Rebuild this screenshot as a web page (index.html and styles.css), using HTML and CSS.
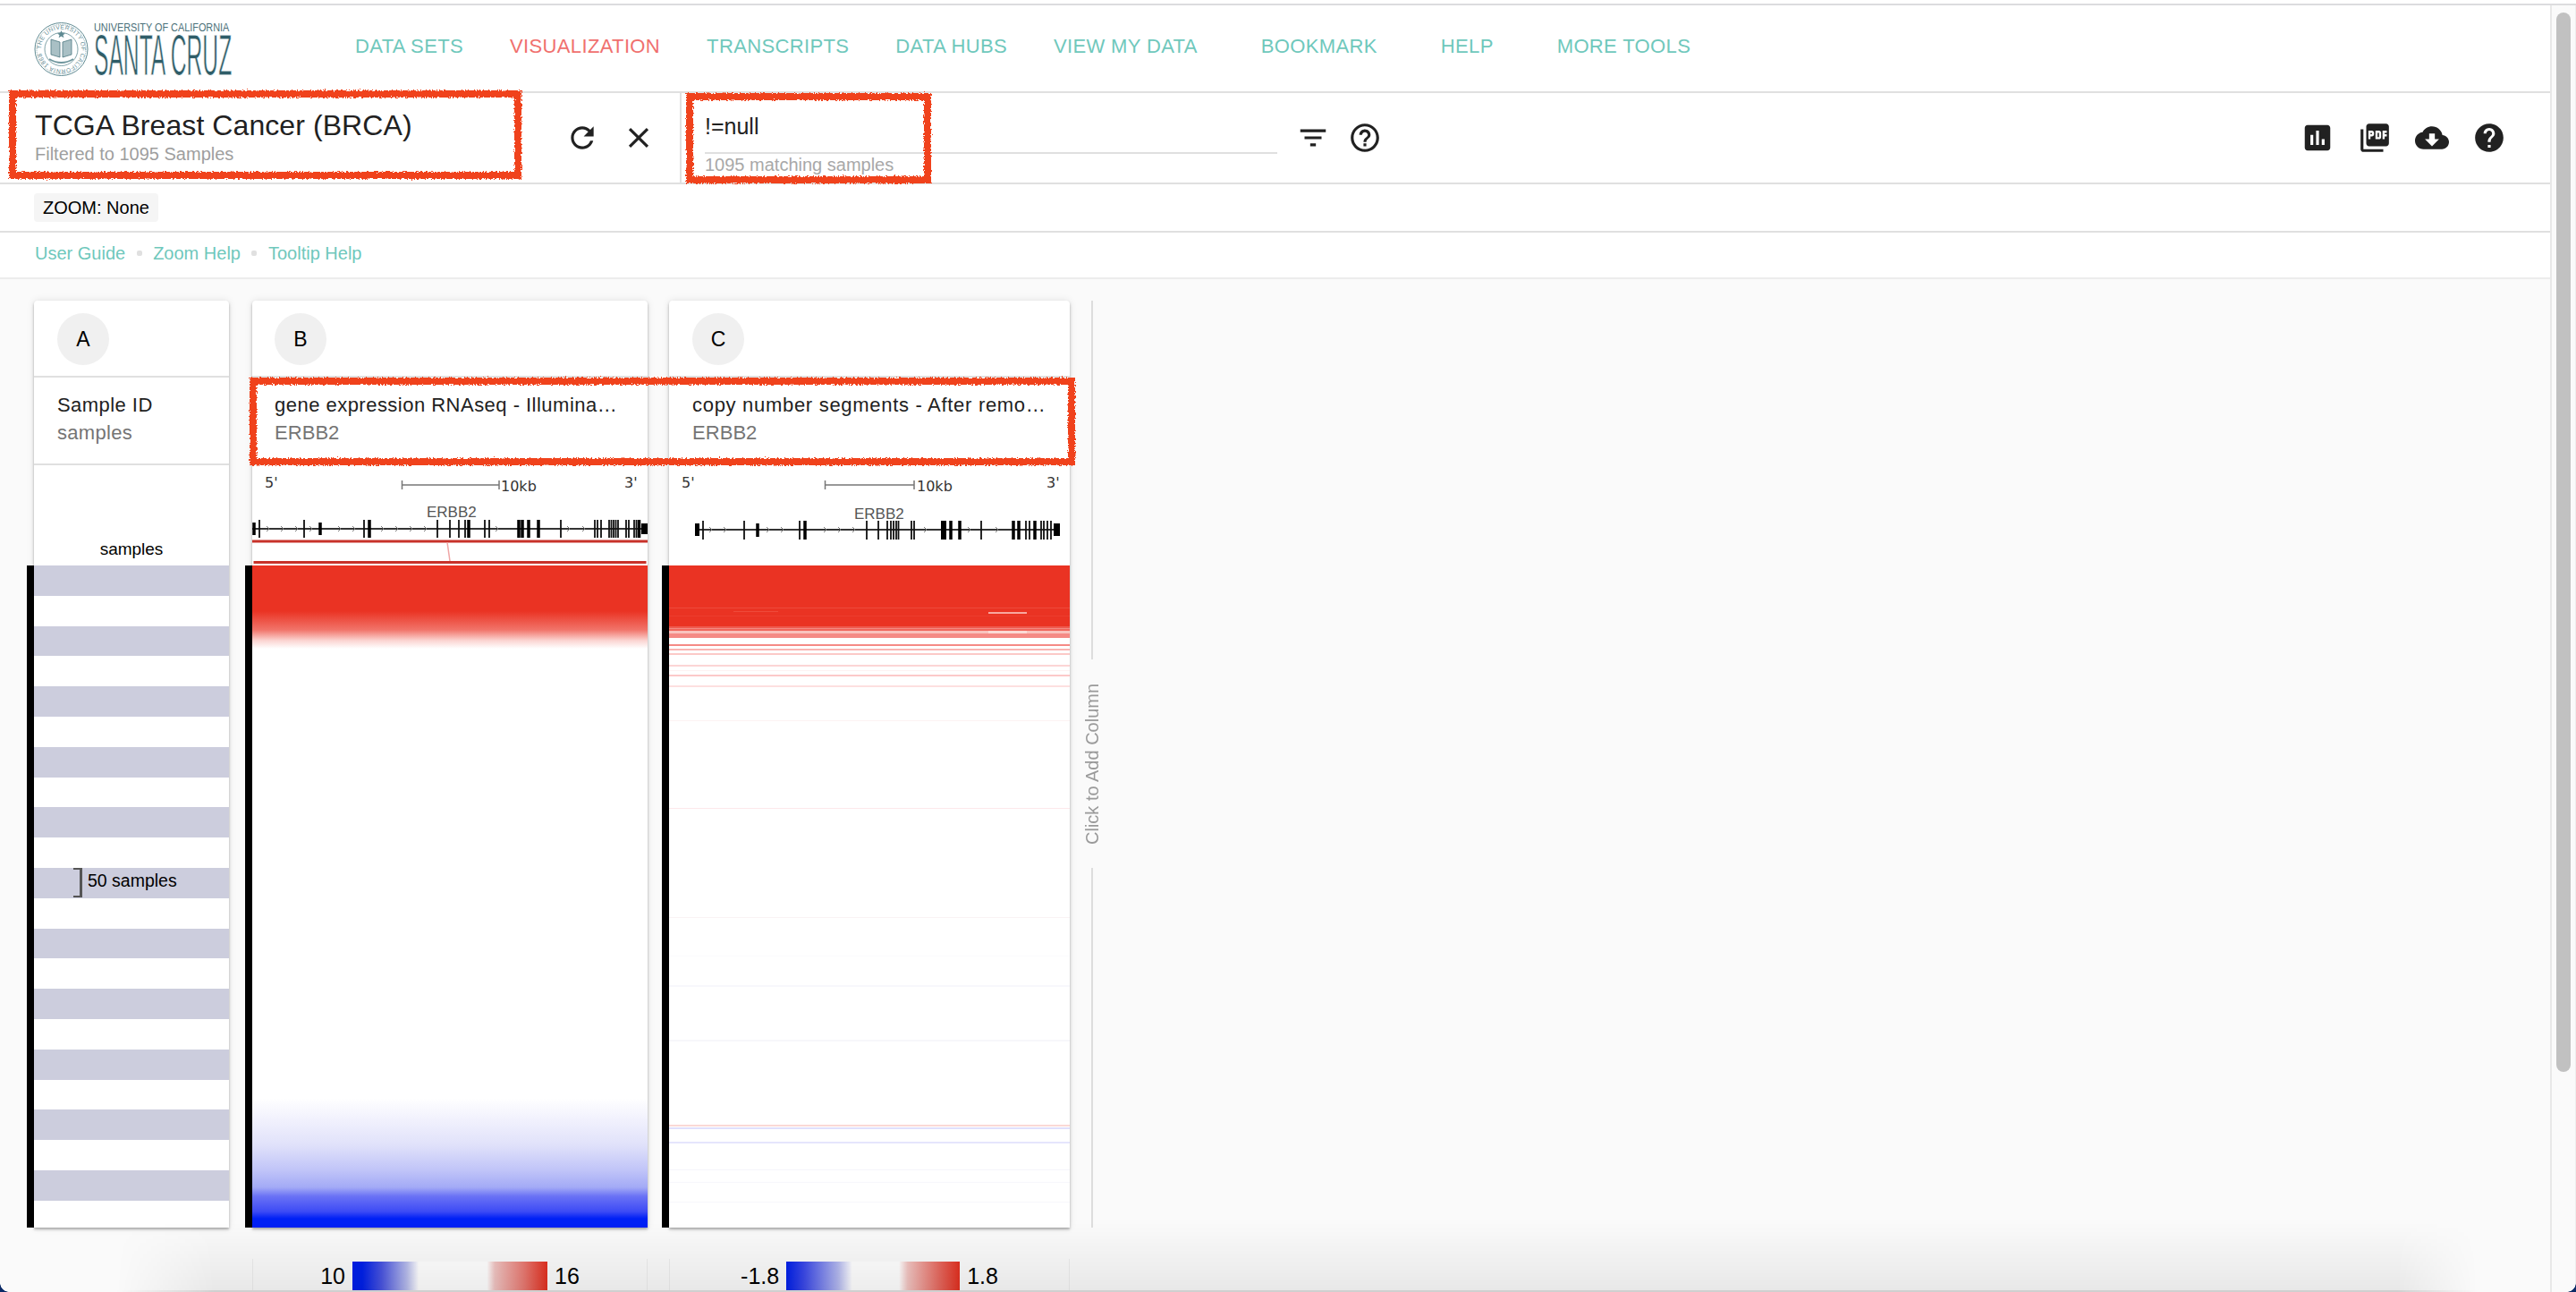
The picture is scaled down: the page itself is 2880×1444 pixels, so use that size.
FILE: index.html
```html
<!DOCTYPE html>
<html lang="en">
<head>
<meta charset="utf-8">
<title>UCSC Xena - Visualization</title>
<link rel="stylesheet" href="styles.css">
</head>
<body>
<svg class="defs" width="0" height="0" aria-hidden="true"><defs>
  <filter id="rough" x="-5%" y="-10%" width="110%" height="120%">
    <feTurbulence type="fractalNoise" baseFrequency="0.6" numOctaves="2" seed="4" result="n"/>
    <feDisplacementMap in="SourceGraphic" in2="n" scale="5" xChannelSelector="R" yChannelSelector="G"/>
  </filter>
</defs></svg>
<div class="shell">
  <div class="main">
    <header class="nav">
      <svg class="logo" viewBox="0 0 226 62" width="226" height="62">
        <defs><path id="ring" d="M30.5 30 m-22.5 0 a22.5 22.5 0 1 1 45 0 a22.5 22.5 0 1 1 -45 0"/></defs>
        <g fill="none" stroke="#5f8a92">
          <circle cx="30.5" cy="30" r="29.5" stroke-width="1"/>
          <circle cx="30.5" cy="30" r="27.5" stroke-width=".7" stroke-dasharray="1 1"/>
          <circle cx="30.5" cy="30" r="18.5" stroke-width=".8"/>
        </g>
        <text class="seal-text"><textPath href="#ring" textLength="136">THE UNIVERSITY OF CALIFORNIA 1868</textPath></text>
        <path d="M19 19 l10 3 v17 l-10 -3z M42 19 l-10 3 v17 l10 -3z" fill="#a9c0c5" stroke="#4c7780" stroke-width=".8"/>
        <path d="M30.500 9 l1.300 3 3.200 .2 -2.500 2 .9 3.100 -2.900 -1.800 -2.900 1.800 .9 -3.100 -2.500 -2 3.200 -.2z" fill="#5f8a92"/>
        <path d="M17 41 q13.500 8 27 0" fill="none" stroke="#6f969d" stroke-width="2"/>
        <text class="logo-top" transform="translate(67 10) scale(.87 1)">UNIVERSITY OF CALIFORNIA</text>
        <text class="logo-main" transform="translate(67 59) scale(.385 1)">SANTA CRUZ</text>
      </svg>
      <nav class="nav-links">
        <a class="nav-link">DATA SETS</a>
        <a class="nav-link is-active">VISUALIZATION</a>
        <a class="nav-link">TRANSCRIPTS</a>
        <a class="nav-link">DATA HUBS</a>
        <a class="nav-link">VIEW MY DATA</a>
        <a class="nav-link is-wide">BOOKMARK</a>
        <a class="nav-link is-wide">HELP</a>
        <a class="nav-link is-wide">MORE TOOLS</a>
      </nav>
    </header>

    <section class="toolbar">
      <div class="cohort-cell">
        <div class="cohort">
          <div class="cohort-title">TCGA Breast Cancer (BRCA)</div>
          <div class="cohort-sub">Filtered to 1095 Samples</div>
        </div>
        <svg class="icon" viewBox="0 0 24 24"><path d="M17.65 6.35C16.2 4.9 14.21 4 12 4c-4.42 0-7.99 3.58-7.99 8s3.57 8 7.99 8c3.73 0 6.84-2.55 7.73-6h-2.08c-.82 2.33-3.04 4-5.65 4-3.31 0-6-2.69-6-6s2.69-6 6-6c1.66 0 3.14.69 4.22 1.78L13 11h7V4l-2.35 2.35z"/></svg>
        <svg class="icon" viewBox="0 0 24 24"><path d="M19 6.41L17.59 5 12 10.59 6.41 5 5 6.41 10.59 12 5 17.59 6.41 19 12 13.41 17.59 19 19 17.59 13.41 12z"/></svg>
      </div>
      <div class="filter-cell">
        <div class="filter-field">
          <div class="filter-input">!=null</div>
          <div class="filter-help">1095 matching samples</div>
        </div>
        <svg class="icon" viewBox="0 0 24 24"><path d="M10 18h4v-2h-4v2zM3 6v2h18V6H3zm3 7h12v-2H6v2z"/></svg>
        <svg class="icon" viewBox="0 0 24 24"><path d="M11 18h2v-2h-2v2zm1-16C6.48 2 2 6.48 2 12s4.48 10 10 10 10-4.48 10-10S17.52 2 12 2zm0 18c-4.41 0-8-3.59-8-8s3.59-8 8-8 8 3.59 8 8-3.59 8-8 8zm0-14c-2.21 0-4 1.79-4 4h2c0-1.1.9-2 2-2s2 .9 2 2c0 2-3 1.75-3 5h2c0-2.25 3-2.5 3-5 0-2.21-1.79-4-4-4z"/></svg>
      </div>
      <div class="action-cell">
        <svg class="icon" viewBox="0 0 24 24"><path d="M19 3H5c-1.1 0-2 .9-2 2v14c0 1.1.9 2 2 2h14c1.1 0 2-.9 2-2V5c0-1.1-.9-2-2-2zM9 17H7v-7h2v7zm4 0h-2V7h2v10zm4 0h-2v-4h2v4z"/></svg>
        <svg class="icon" viewBox="0 0 24 24"><path d="M20 2H8c-1.1 0-2 .9-2 2v12c0 1.1.9 2 2 2h12c1.1 0 2-.9 2-2V4c0-1.1-.9-2-2-2zm-8.500 7.500c0 .83-.67 1.500-1.500 1.500H9v2H7.500V7H10c.83 0 1.500.67 1.500 1.500v1zm5 2c0 .83-.67 1.500-1.500 1.500h-2.500V7H15c.83 0 1.500.67 1.500 1.500v3zm4-3H19v1h1.500V11H19v2h-1.500V7h3v1.500zM9 9.500h1v-1H9v1zM4 6H2v14c0 1.100.9 2 2 2h14v-2H4V6zm10 5.500h1v-3h-1v3z"/></svg>
        <svg class="icon" viewBox="0 0 24 24"><path d="M19.35 10.04C18.67 6.59 15.64 4 12 4 9.11 4 6.6 5.64 5.35 8.04 2.34 8.36 0 10.91 0 14c0 3.31 2.69 6 6 6h13c2.76 0 5-2.24 5-5 0-2.64-2.05-4.78-4.65-4.96zM17 13l-5 5-5-5h3V9h4v4h3z"/></svg>
        <svg class="icon" viewBox="0 0 24 24"><path d="M12 2C6.48 2 2 6.48 2 12s4.48 10 10 10 10-4.48 10-10S17.52 2 12 2zm1 17h-2v-2h2v2zm2.07-7.75l-.9.92C13.45 12.9 13 13.5 13 15h-2v-.5c0-1.1.45-2.1 1.17-2.83l1.24-1.26c.37-.36.59-.86.59-1.41 0-1.1-.9-2-2-2s-2 .9-2 2H8c0-2.21 1.79-4 4-4s4 1.79 4 4c0 .88-.36 1.68-.93 2.25z"/></svg>
      </div>
    </section>

    <section class="zoom-bar"><span class="zoom-chip">ZOOM: None</span></section>

    <section class="help-bar">
      <a class="help-link">User Guide</a><span class="help-dot"></span>
      <a class="help-link">Zoom Help</a><span class="help-dot"></span>
      <a class="help-link">Tooltip Help</a>
    </section>

    <section class="board">
      <div class="col col-a">
        <div class="card">
          <div class="card-head"><span class="badge">A</span></div>
          <div class="card-title">
            <div class="title-main">Sample ID</div>
            <div class="title-sub">samples</div>
          </div>
          <div class="card-track track-a">samples</div>
          <div class="heat heat-a">
            <div class="sample-note"><span class="sample-bracket"></span><span class="sample-count">50 samples</span></div>
          </div>
        </div>
      </div>

      <div class="col col-b">
        <div class="card">
          <div class="card-head"><span class="badge">B</span></div>
          <div class="card-title">
            <div class="title-main">gene expression RNAseq - Illumina…</div>
            <div class="title-sub">ERBB2</div>
          </div>
          <svg class="card-track" viewBox="282 520 442 112" width="442" height="112">
            <text class="tk" x="296" y="545">5'</text>
            <text class="tk" x="698" y="545">3'</text>
            <path class="tk-scale" d="M449.500 537v10M449.500 542H558M558 537v10"/>
            <text class="tk" x="560" y="549">10kb</text>
            <text class="tk-gene" x="477" y="578">ERBB2</text>
            <path class="tk-line" d="M282 591H724"/>
            <path class="tk-arrow" d="M298 588l3 3-3 3M314 588l3 3-3 3M330 588l3 3-3 3M346 588l3 3-3 3M378 588l3 3-3 3M394 588l3 3-3 3M426 588l3 3-3 3M442 588l3 3-3 3M458 588l3 3-3 3M474 588l3 3-3 3M554 588l3 3-3 3M634 588l3 3-3 3M651 588l3 3-3 3"/>
            <path class="tk-exon" d="M290 581v20M340 581v20M407 581v20M489 581v20M503 581v20M513 581v20M520 581v20M542 581v20M547 581v20M627 581v20M665 581v20M668 581v20M672 581v20M681 581v20M683.500 581v20M686 581v20M688.500 581v20M691 581v20M700 581v20M703 581v20M709 581v20M711.500 581v20"/>
            <path class="tk-exon-b" d="M284 584v14M358 584v14M413 581v20M524 581v20M580 581v20M584 581v20M591 581v20M602 581v20M714.500 581v20"/>
            <rect x="717" y="585" width="7" height="12"/>
            <rect class="tk-red" x="282" y="603.500" width="442" height="3"/>
            <path class="tk-link" d="M500 606L503 627"/>
            <rect class="tk-red" x="283.500" y="627" width="439" height="3"/>
          </svg>
          <div class="heat heat-b"></div>
        </div>
        <div class="legend">
          <span>10</span><span class="legend-bar bar-b"></span><span>16</span>
        </div>
      </div>

      <div class="col col-c">
        <div class="card">
          <div class="card-head"><span class="badge">C</span></div>
          <div class="card-title">
            <div class="title-main">copy number segments - After remo…</div>
            <div class="title-sub">ERBB2</div>
          </div>
          <svg class="card-track" viewBox="748 520 448 112" width="448" height="112">
            <text class="tk" x="762" y="545">5'</text>
            <text class="tk" x="1170" y="545">3'</text>
            <path class="tk-scale" d="M922.500 537v10M922.500 542H1022M1022 537v10"/>
            <text class="tk" x="1025" y="549">10kb</text>
            <text class="tk-gene" x="955" y="580">ERBB2</text>
            <path class="tk-line" d="M777 592H1185"/>
            <path class="tk-arrow" d="M793 589l3 3-3 3M809 589l3 3-3 3M857 589l3 3-3 3M873 589l3 3-3 3M921 589l3 3-3 3M937 589l3 3-3 3M953 589l3 3-3 3M1033 589l3 3-3 3M1082 589l3 3-3 3M1113 589l3 3-3 3"/>
            <path class="tk-exon" d="M786 582v21M832 582v21M894 582v21M969 582v21M982 582v21M992 582v21M996 582v21M999 582v21M1002 582v21M1004.500 582v21M1019 582v21M1022 582v21M1097 582v21M1147 582v21M1151 582v21M1164 582v21M1167 582v21M1171 582v21M1175 582v21"/>
            <path class="tk-exon-b" d="M847 585v15M900 582v21M1063 582v21M1073 582v21M1133 582v21M1139 582v21M1157 582v21"/>
            <rect x="777" y="585" width="5" height="14"/>
            <rect x="1052" y="582" width="6" height="21"/>
            <rect x="1178" y="585" width="7" height="14"/>
          </svg>
          <div class="heat">
            <svg class="heat-svg" viewBox="748 632 448 740" preserveAspectRatio="none">
              <rect x="748" y="632" width="448" height="68" fill="#ea3323"/>
              <rect x="748" y="679" width="448" height="1" fill="#ee4a3b"/>
              <rect x="748" y="688" width="448" height="1" fill="#ec3d2e"/>
              <rect x="820" y="683" width="50" height="1" fill="#ee4a3b"/>
              <rect x="1105" y="684" width="43" height="2" fill="#f8a8a0"/>
              <rect x="748" y="700" width="448" height="2" fill="#ee5a4e"/>
              <rect x="748" y="702" width="448" height="1" fill="#f48a82"/>
              <rect x="748" y="703" width="448" height="2" fill="#f0665c"/>
              <rect x="748" y="705" width="448" height="3" fill="#f9c2bd"/>
              <rect x="748" y="708" width="448" height="5" fill="#f58a85"/>
              <rect x="1105" y="705" width="43" height="3" fill="#fbdad6"/>
              <rect x="748" y="720" width="448" height="2" fill="#f58a85"/>
              <rect x="748" y="725" width="448" height="2" fill="#fab5b2"/>
              <rect x="748" y="730" width="448" height="2" fill="#fcc9c7"/>
              <rect x="748" y="743" width="448" height="2" fill="#fcd5d5"/>
              <rect x="748" y="749" width="448" height="1" fill="#fef2f2"/>
              <rect x="748" y="754" width="448" height="2" fill="#fcc9c9"/>
              <rect x="748" y="766" width="448" height="2" fill="#fde0e0"/>
              <rect x="748" y="805" width="448" height="1" fill="#fdf2f2"/>
              <rect x="748" y="903" width="448" height="1" fill="#fde8ea"/>
              <rect x="748" y="1025" width="448" height="1" fill="#f9f3f4"/>
              <rect x="748" y="1068" width="448" height="1" fill="#fbfbfd"/>
              <rect x="748" y="1101" width="448" height="2" fill="#f7f7fc"/>
              <rect x="748" y="1162" width="448" height="2" fill="#f7f7fb"/>
              <rect x="748" y="1257" width="448" height="2" fill="#fbd9d5"/>
              <rect x="748" y="1260" width="448" height="2" fill="#e0e0fc"/>
              <rect x="748" y="1276" width="448" height="2" fill="#e5e5fc"/>
              <rect x="748" y="1307" width="448" height="1" fill="#f5f5fb"/>
              <rect x="748" y="1321" width="448" height="1" fill="#f7f7fb"/>
              <rect x="748" y="1343" width="448" height="1" fill="#f7f7fb"/>
            </svg>
          </div>
        </div>
        <div class="legend">
          <span>-1.8</span><span class="legend-bar bar-c"></span><span>1.8</span>
        </div>
      </div>

      <div class="add-col"><div class="add-tab">Click to Add Column</div></div>
    </section>
  </div>
  <aside class="scroll"><div class="scroll-thumb"></div></aside>
</div>

<div class="mark mark-cohort"></div>
<div class="mark mark-filter"></div>
<div class="mark mark-titles"></div>
<div class="shade"></div>
<div class="corner corner-l"></div>
<div class="corner corner-r"></div>
</body>
</html>
```

FILE: styles.css
```css
* { box-sizing: border-box; }
html, body { margin: 0; height: 1444px; overflow: hidden; }
body {
  position: relative;
  padding-top: 4px;
  background: #fff;
  color: #212121;
  font-family: "Liberation Sans", Arial, sans-serif;
}
.defs { position: absolute; }

.shell { display: flex; height: 1440px; border-top: 2px solid #dcdcde; background: #fafafa; }
.main { flex: 1; min-width: 0; overflow: hidden; }

/* nav */
.nav { display: flex; align-items: center; height: 98px; padding: 0 0 0 38px; background: #fff; border-bottom: 2px solid #e0e0e0; }
.logo { flex: none; margin-top: 3px; overflow: visible; }
.seal-text { font-size: 6.600px; fill: #5f8a92; }
.logo-top { font-size: 12.500px; fill: #4a7079; }
.logo-main { font-size: 64px; fill: #2f5d68; stroke: #fff; stroke-width: .9px; }
.nav-links { display: flex; gap: 52px; margin-left: 133px; margin-top: -4px; }
.nav-link { font-size: 22px; line-height: 26px; letter-spacing: .36px; color: #6fc8bc; white-space: nowrap; }
.nav-link.is-active { color: #f0706e; }
.nav-link.is-wide { margin-left: 19px; }

/* toolbar */
.toolbar { display: flex; height: 102px; background: #fff; border-bottom: 2px solid #e0e0e0; }
.icon { flex: none; width: 38px; height: 38px; fill: #212121; }
.cohort-cell { display: flex; align-items: center; width: 762px; padding-left: 39px; border-right: 2px solid #e0e0e0; }
.cohort { width: 593px; align-self: flex-start; padding-top: 18px; }
.cohort + .icon + .icon { margin-left: 25px; }
.cohort-title { font-size: 32px; line-height: 37px; letter-spacing: .08px; white-space: nowrap; }
.cohort-sub { font-size: 20px; line-height: 26px; color: #9e9e9e; white-space: nowrap; }
.filter-cell { display: flex; align-items: center; padding-left: 26px; }
.filter-field { width: 640px; margin-right: 21px; align-self: flex-start; padding-top: 22px; }
.filter-input { height: 46px; font-size: 25px; line-height: 30px; border-bottom: 2px solid #e0e0e0; }
.filter-help { font-size: 20px; line-height: 24px; color: #a8a8a8; white-space: nowrap; }
.filter-field + .icon + .icon { margin-left: 20px; }
.action-cell { display: flex; align-items: center; gap: 26px; margin-left: auto; padding-right: 49px; }

/* zoom + help */
.zoom-bar { display: flex; align-items: center; height: 54px; padding: 0 0 0 38px; background: #fff; border-bottom: 2px solid #e0e0e0; }
.zoom-chip { height: 32px; padding: 0 10px; font-size: 20px; line-height: 32px; color: #000; background: #f5f5f5; border-radius: 4px; }
.help-bar { display: flex; align-items: center; gap: 12.500px; height: 52px; padding: 0 0 4px 39px; background: #fff; border-bottom: 2px solid #ececec; }
.help-link { font-size: 20px; line-height: 24px; color: #6fc8bc; white-space: nowrap; }
.help-dot { width: 6px; height: 6px; border-radius: 2px; background: #e0e0e0; }

/* columns */
.board { display: flex; align-items: flex-start; padding: 24px 0 0 38px; }
.col { display: flex; flex-direction: column; flex: none; }
.col-a { width: 218px; margin-right: 26px; }
.col-b { width: 442px; margin-right: 24px; }
.col-c { width: 448px; margin-right: 24px; }
.card { background: #fff; border-radius: 4px 4px 0 0; box-shadow: 0 2px 3px rgba(0,0,0,.3), 0 0 8px rgba(0,0,0,.1); }
.card-head { height: 86px; padding: 14px 0 0 26px; border-bottom: 2px solid #e0e0e0; }
.col-b .card-head, .col-b .card-title { padding-left: 25px; }
.badge { display: flex; align-items: center; justify-content: center; width: 58px; height: 58px; border-radius: 50%; background: #f0f0f0; color: #000; font-size: 23px; }
.card-title { height: 98px; padding: 16px 0 0 26px; border-bottom: 2px solid #e0e0e0; white-space: nowrap; overflow: hidden; }
.title-main { font-size: 22px; line-height: 30px; letter-spacing: .7px; color: #212121; }
.title-sub { font-size: 22px; line-height: 32px; letter-spacing: .05px; color: #757575; }
.col-a .title-main { letter-spacing: .45px; }
.col-a .title-sub { letter-spacing: .3px; }
.col-b .title-main { letter-spacing: .48px; }
.card-track { display: block; height: 112px; }
.track-a { display: flex; align-items: flex-end; justify-content: center; padding-bottom: 8px; font-size: 19px; line-height: 20px; color: #000; }

/* genome track */
.tk { fill: #333; font-family: "DejaVu Sans", sans-serif; font-size: 16px; }
.tk-gene { font-size: 17px; fill: #555; }
.tk-scale { fill: none; stroke: #777; stroke-width: 1.500; }
.tk-line { fill: none; stroke: #333; stroke-width: 2; }
.tk-arrow { fill: none; stroke: #777; stroke-width: 1; }
.tk-exon { fill: none; stroke: #111; stroke-width: 1.800; }
.tk-exon-b { fill: none; stroke: #000; stroke-width: 3.500; }
.tk-red { fill: #c8322a; }
.tk-link { fill: none; stroke: #f0a5a5; stroke-width: 1.500; }

/* heatmaps */
.heat { position: relative; height: 740px; }
.heat::before { content: ""; position: absolute; left: -8px; top: 0; bottom: 0; width: 8px; background: #000; }
.heat-svg { display: block; width: 100%; height: 100%; }
.heat-a { background: repeating-linear-gradient(to bottom, #cccddd 0, #cccddd 33.800px, #fff 33.800px, #fff 67.600px); }
.heat-b {
  background: linear-gradient(to bottom,
    #ea3323 0, #ea3323 51px, #f1746a 72px, #fbd5d2 84px, #fff 93px,
    #fff 595px, #f1f1fd 620px, #e0e1fa 648px, #c0c4f8 676px, #a3aaf6 695px,
    #6a72f5 705px, #3d4bf5 722px, #0020f5 730px, #0020f5 740px);
}
.sample-note { position: absolute; left: 44px; top: 338px; display: flex; align-items: center; height: 33px; font-size: 19.500px; color: #000; white-space: nowrap; }
.sample-bracket { width: 10px; height: 33px; margin-right: 6px; border: 2px solid #555; border-left: 0; border-right-width: 3px; }
.sample-count { margin-top: -4px; }

/* legends */
.legend { display: flex; align-items: center; justify-content: center; gap: 8px; height: 60px; margin-top: 35px; padding-bottom: 25px; padding-top: 3px; font-size: 25px; color: #000; border-left: 1px solid rgba(0,0,0,.05); border-right: 1px solid rgba(0,0,0,.05); }
.legend-bar { height: 32px; }
.bar-b { width: 218px; background: linear-gradient(to right, #0020e8 0, #0020e8 5%, #4a55e0 15%, #b8bdec 28%, #fff 34%, #fff 69%, #f0c4c2 73%, #e87a72 88%, #e23020 100%); }
.bar-c { width: 194px; background: linear-gradient(to right, #0020e8 0, #3a48e8 10%, #b4b9ef 30%, #fff 38%, #fff 65%, #f2c5c2 70%, #e66a60 88%, #e23020 100%); }

/* add column */
.add-col { position: relative; flex: none; width: 2px; height: 1036px; background: #dddddd; }
.add-tab { position: absolute; left: -12px; top: 401px; width: 26px; height: 233px; display: flex; align-items: center; justify-content: center; background: #fafafa; writing-mode: vertical-rl; transform: rotate(180deg); font-size: 20px; color: #9a9a9a; white-space: nowrap; }

/* scrollbar */
.scroll { flex: none; width: 29px; padding: 8px 0 0 5px; border-left: 2px solid #e8e8e8; border-right: 1px solid #eee; background: #fafafa; }
.scroll-thumb { width: 16px; height: 1184px; border-radius: 8px; background: #c1c1c1; }

/* annotation marks */
.mark { position: absolute; border: 8px solid #f0421f; filter: url(#rough); pointer-events: none; }
.mark-cohort { left: 10px; top: 101px; width: 573px; height: 99px; }
.mark-filter { left: 767px; top: 104px; width: 274px; height: 101px; }
.mark-titles { left: 279px; top: 422px; width: 923px; height: 98px; }

/* window chrome */
.shade { position: absolute; left: 130px; right: 110px; bottom: 0; height: 78px; border-bottom: 2px solid #d0d0d0; background: linear-gradient(to bottom, rgba(0,0,0,0), rgba(0,0,0,.07)); -webkit-mask-image: linear-gradient(to right, transparent 0, #000 110px, #000 calc(100% - 90px), transparent 100%); pointer-events: none; }
.corner { position: absolute; bottom: 0; width: 10px; height: 10px; }
.corner-l { left: 0; background: radial-gradient(circle at top right, transparent 9.500px, #0b2a66 10px); }
.corner-r { right: 0; background: radial-gradient(circle at top left, transparent 9.500px, #0b2a66 10px); }
```
